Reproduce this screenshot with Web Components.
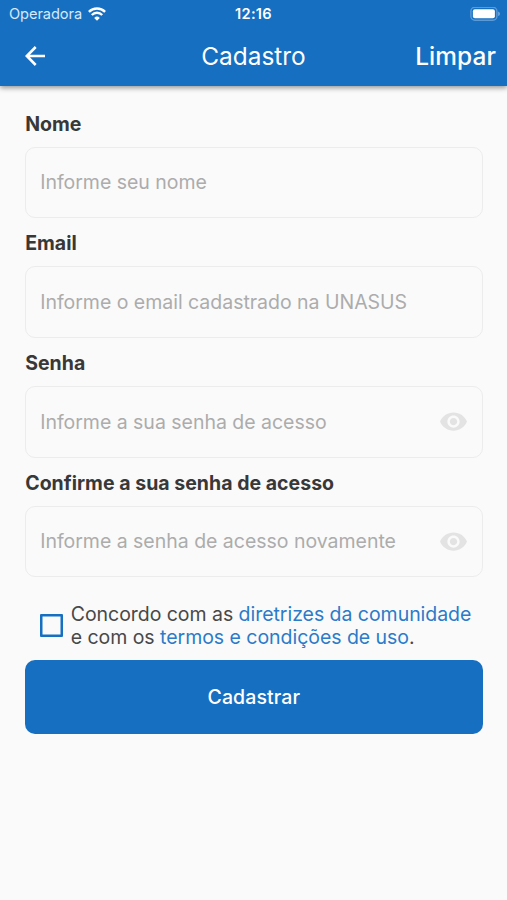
<!DOCTYPE html>
<html lang="pt-BR">
<head>
<meta charset="utf-8">
<title>Cadastro</title>
<style>
html, body { margin: 0; height: 100%; background: #fafafa; }
body { font-family: Inter, "Liberation Sans", sans-serif; overflow: hidden; }
</style>
</head>
<body>
<signup-screen></signup-screen>
<script>
function define(name, html) {
  const template = document.createElement('template');
  template.innerHTML = html;
  customElements.define(name, class extends HTMLElement {
    constructor() {
      super();
      this.attachShadow({ mode: 'open' }).append(template.content.cloneNode(true));
    }
  });
}

define('status-bar', `
<style>
:host { display: grid; grid-template-columns: 1fr auto 1fr; align-items: center; height: 28px; box-sizing: border-box; padding: 0 7px 0 9px; color: #fff; }
.carrier { display: flex; align-items: center; gap: 6px; font-size: 14.6px; letter-spacing: -.07px; color: #d8e9f8; }
.time { font-size: 14.6px; font-weight: 600; letter-spacing: .3px; margin-left: -2px; }
.battery { justify-self: end; }
svg { display: block; }
</style>
<div class="carrier"><span>Operadora</span>
<svg width="18" height="14" viewBox="0 0 18 14" fill="none" stroke="#fff" stroke-width="2.4"><path d="M.9 4.9a11.5 11.5 0 0 1 16.2 0M3.8 8a7.3 7.3 0 0 1 10.4 0"/><path d="M9 13.8 6.2 10.9a4 4 0 0 1 5.6 0Z" fill="#fff" stroke="none"/></svg></div>
<div class="time">12:16</div>
<svg class="battery" width="30" height="15" viewBox="0 0 30 15"><rect x=".9" y=".2" width="26" height="13" rx="4" fill="none" stroke="#5c9ad6" stroke-width="1.4"/><rect x="2.9" y="2.2" width="22" height="9" rx="2" fill="#fff"/><path d="M28.2 4.4c2.2.7 2.2 4 0 4.7Z" fill="#78abdc"/></svg>`);

define('nav-bar', `
<style>
:host { display: grid; grid-template-columns: 1fr auto 1fr; align-items: center; height: 58px; box-sizing: border-box; padding: 0 11px 2px 25px; color: #fff; font-size: 24.4px; }
svg { display: block; }
.title { margin-left: -14px; }
.action { justify-self: end; font-weight: 500; letter-spacing: .1px; }
</style>
<svg width="21" height="20" viewBox="0 0 21 20" fill="none" stroke="#fff" stroke-width="2.6"><path d="M20 10H2M10.7 1 1.8 10l8.9 9"/></svg>
<div class="title"><slot></slot></div>
<div class="action"><slot name="action"></slot></div>`);

define('eye-icon', `
<style>:host { display: block; width: 27px; height: 19px; } svg { display: block; }</style>
<svg width="27" height="19" viewBox="1 4.3 22 15.2" fill="#e3e3e3"><path d="M12 4.5C7 4.5 2.73 7.61 1 12c1.73 4.39 6 7.5 11 7.5s9.27-3.11 11-7.5c-1.73-4.39-6-7.5-11-7.5zM12 17c-2.76 0-5-2.24-5-5s2.24-5 5-5 5 2.24 5 5-2.24 5-5 5zm0-8c-1.66 0-3 1.34-3 3s1.34 3 3 3 3-1.34 3-3-1.34-3-3-3z"/></svg>`);

define('form-field', `
<style>
:host { display: flex; flex-direction: column; height: 119.7px; }
.label { height: 25px; line-height: 25px; margin-bottom: 10px; font-size: 19.5px; font-weight: 700; color: #383838; letter-spacing: .02px; }
.box { display: flex; align-items: center; justify-content: space-between; height: 71.8px; box-sizing: border-box; border: 1.8px solid #ececec; border-radius: 10px; padding: 0 15px 0 14px; font-size: 19.5px; letter-spacing: -.02px; color: #acacac; }
</style>
<div class="label"><slot name="label"></slot></div>
<div class="box"><span><slot></slot></span><slot name="icon"></slot></div>`);

define('terms-check', `
<style>
:host { display: flex; align-items: center; gap: 8px; padding-left: 14.5px; height: 46px; color: #484848; font-size: 19.5px; line-height: 23px; letter-spacing: -.04px; white-space: nowrap; }
.check { width: 23px; height: 23px; box-sizing: border-box; border: 2px solid #1670c2; box-shadow: inset 0 0 0 .5px #1670c2; border-radius: 1px; flex: none; }
div { padding-top: 1px; }
a { color: #2b7bc9; }
</style>
<span class="check"></span>
<div>Concordo com as <a>diretrizes da comunidade</a><br>e com os <a>termos e condições de uso</a>.</div>`);

define('primary-button', `
<style>
:host { display: flex; align-items: center; justify-content: center; height: 73.5px; border-radius: 10px; background: #166fc1; color: #fff; font-size: 19.5px; font-weight: 500; letter-spacing: .1px; }
</style><slot></slot>`);

define('signup-screen', `
<style>
:host { display: flex; flex-direction: column; height: 900px; background: #fafafa; }
header { flex: none; height: 86px; background: #166fc1; box-shadow: 0 2px 5px rgba(0,0,0,.4); }
main { display: flex; flex-direction: column; padding: 25.5px 24.5px 0 25.2px; }
form-field { flex: none; }
terms-check { margin-top: 12.2px; margin-bottom: 12px; }
</style>
<header><status-bar></status-bar><nav-bar>Cadastro<span slot="action">Limpar</span></nav-bar></header>
<main>
<form-field><span slot="label">Nome</span>Informe seu nome</form-field>
<form-field><span slot="label">Email</span>Informe o email cadastrado na UNASUS</form-field>
<form-field><span slot="label">Senha</span>Informe a sua senha de acesso<eye-icon slot="icon"></eye-icon></form-field>
<form-field><span slot="label">Confirme a sua senha de acesso</span>Informe a senha de acesso novamente<eye-icon slot="icon"></eye-icon></form-field>
<terms-check></terms-check>
<primary-button>Cadastrar</primary-button>
</main>`);
</script>
</body>
</html>
